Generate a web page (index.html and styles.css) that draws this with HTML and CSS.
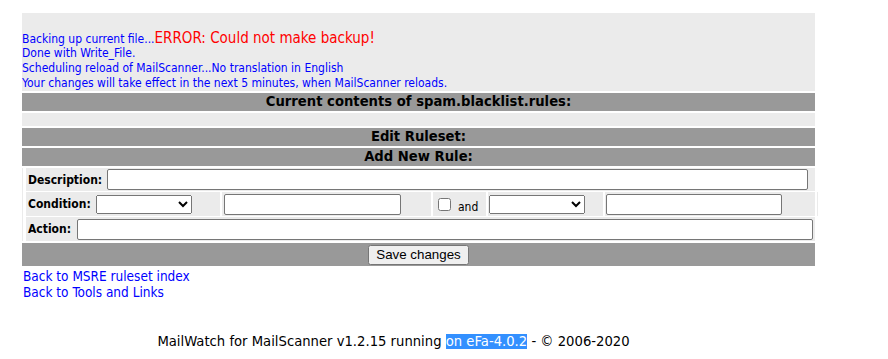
FILE: index.html
```html
<!DOCTYPE html>
<html>
<head>
<meta charset="utf-8">
<title>MailWatch - MSRE</title>
<link rel="stylesheet" href="styles.css">
</head>
<body>
<div class="page">
  <div class="msgs">
    <div class="msg">Backing up current file...<span class="err">ERROR: Could not make backup!</span></div>
    <div class="msg">Done with Write_File.</div>
    <div class="msg">Scheduling reload of MailScanner...No translation in English</div>
    <div class="msg">Your changes will take effect in the next 5 minutes, when MailScanner reloads.</div>
  </div>
  <div class="bar">Current contents of spam.blacklist.rules:</div>
  <div class="blank"></div>
  <div class="bar">Edit Ruleset:</div>
  <div class="bar">Add New Rule:</div>
  <form class="form">
    <div class="row row-desc">
      <label class="lbl">Description:</label>
      <input type="text" class="txt in-desc">
    </div>
    <div class="row row-cond">
      <div class="cell c1"><label class="lbl lbl-cond">Condition:</label><select class="sel"><option></option></select></div>
      <div class="cell c2"><input type="text" class="txt in-c2"></div>
      <div class="cell c3"><input type="checkbox" class="chk"><span class="and">and</span></div>
      <div class="cell c4"><select class="sel"><option></option></select></div>
      <div class="cell c5"><input type="text" class="txt in-c5"></div>
      <div class="cell c6"></div>
    </div>
    <div class="row row-act">
      <label class="lbl lbl-act">Action:</label>
      <input type="text" class="txt in-act">
    </div>
  </form>
  <div class="savebar"><button type="button" class="btn">Save changes</button></div>
  <div class="links">
    <a class="lnk" href="#">Back to MSRE ruleset index</a>
    <a class="lnk" href="#">Back to Tools and Links</a>
  </div>
  <div class="footer">MailWatch for MailScanner v1.2.15 running <span class="hl">on eFa-4.0.2</span> - © 2006-2020</div>
</div>
</body>
</html>
```

FILE: styles.css
```css
html, body {
  margin: 0;
  padding: 0;
  background: #ffffff;
}
body {
  margin: 8px;
  font-family: "DejaVu Sans Condensed", "DejaVu Sans", sans-serif;
  font-stretch: condensed;
  color: #000;
}
.page {
  margin: 5px 0 0 14px;
  width: 793px;
}
.msgs {
  background: #ebebeb;
  height: 78px;
  box-sizing: border-box;
  padding-top: 18px;
  font-size: 12px;
  line-height: 15px;
  color: #0000ff;
}
.msg {
  height: 15px;
  white-space: nowrap;
}
.err {
  color: #ff0000;
  font-size: 15px;
  line-height: 15px;
}
.bar {
  margin-top: 2px;
  height: 18px;
  background: #999999;
  text-align: center;
  font-family: "DejaVu Sans", sans-serif;
  font-stretch: normal;
  font-weight: bold;
  font-size: 13.2px;
  line-height: 18px;
  color: #000;
}
.blank {
  margin-top: 2px;
  height: 13px;
  background: #ebebeb;
}
.form {
  margin: 2px 0 0 0;
  border-left: 1px solid #ebebeb;
  padding-left: 3px;
  background: #ffffff;
  display: flex;
  flex-direction: column;
  gap: 1px;
}
.row {
  display: flex;
  align-items: center;
  background: #ebebeb;
  box-sizing: border-box;
  padding-left: 2px;
}
.row-desc { height: 23px; }
.row-act { height: 24px; }
.row-cond {
  height: 24px;
  background: transparent;
  padding-left: 0;
  gap: 2px;
  width: 792px;
}
.lbl {
  font-weight: bold;
  font-size: 12px;
  white-space: nowrap;
}
.row-desc .lbl { width: 79px; }
.lbl-cond { display: inline-block; width: 68px; }
.lbl-act { width: 49px; }
.txt {
  box-sizing: border-box;
  height: 21px;
  margin: 0;
  padding: 1px 2px;
  border: 1px solid #767676;
  border-radius: 2px;
  background: #fff;
  font-family: "Liberation Sans", sans-serif;
  font-size: 13.33px;
}
.in-desc { width: 701px; }
.in-act { width: 736px; }
.in-c2 { width: 177px; }
.in-c5 { width: 176px; }
.cell {
  height: 24px;
  background: #ebebeb;
  display: flex;
  align-items: center;
  box-sizing: border-box;
  flex: none;
}
.c1 { width: 194px; padding-left: 2px; }
.c2 { width: 209px; padding-left: 2px; }
.c3 { width: 53px; padding-left: 5px; }
.c4 { width: 115px; padding-left: 1px; }
.c5 { width: 210px; padding-left: 1px; }
.c6 { width: 1px; }
.sel {
  box-sizing: border-box;
  width: 96px;
  height: 19px;
  margin: 0;
  font-family: "Liberation Sans", sans-serif;
  font-size: 13.33px;
}
.chk {
  width: 13px;
  height: 13px;
  margin: 0;
}
.and {
  margin-left: 7px;
  font-size: 12px;
  padding-top: 5px;
}
.savebar {
  margin-top: 2px;
  height: 23px;
  background: #999999;
  display: flex;
  align-items: center;
  justify-content: center;
}
.btn {
  font-family: "Liberation Sans", sans-serif;
  font-size: 13.33px;
  height: 20px;
  margin: 0;
  padding: 0 6px;
}
.links {
  margin-top: 2px;
  display: flex;
  flex-direction: column;
  align-items: flex-start;
  padding-left: 1px;
}
.lnk {
  color: #0000ff;
  text-decoration: none;
  font-size: 13.5px;
  line-height: 16px;
}
.footer {
  margin-top: 34px;
  padding-right: 50px;
  text-align: center;
  font-family: "DejaVu Sans", sans-serif;
  font-stretch: normal;
  font-size: 13.2px;
  line-height: 16px;
  white-space: nowrap;
}
.hl {
  background: #3390ff;
  color: #fff;
}
```
